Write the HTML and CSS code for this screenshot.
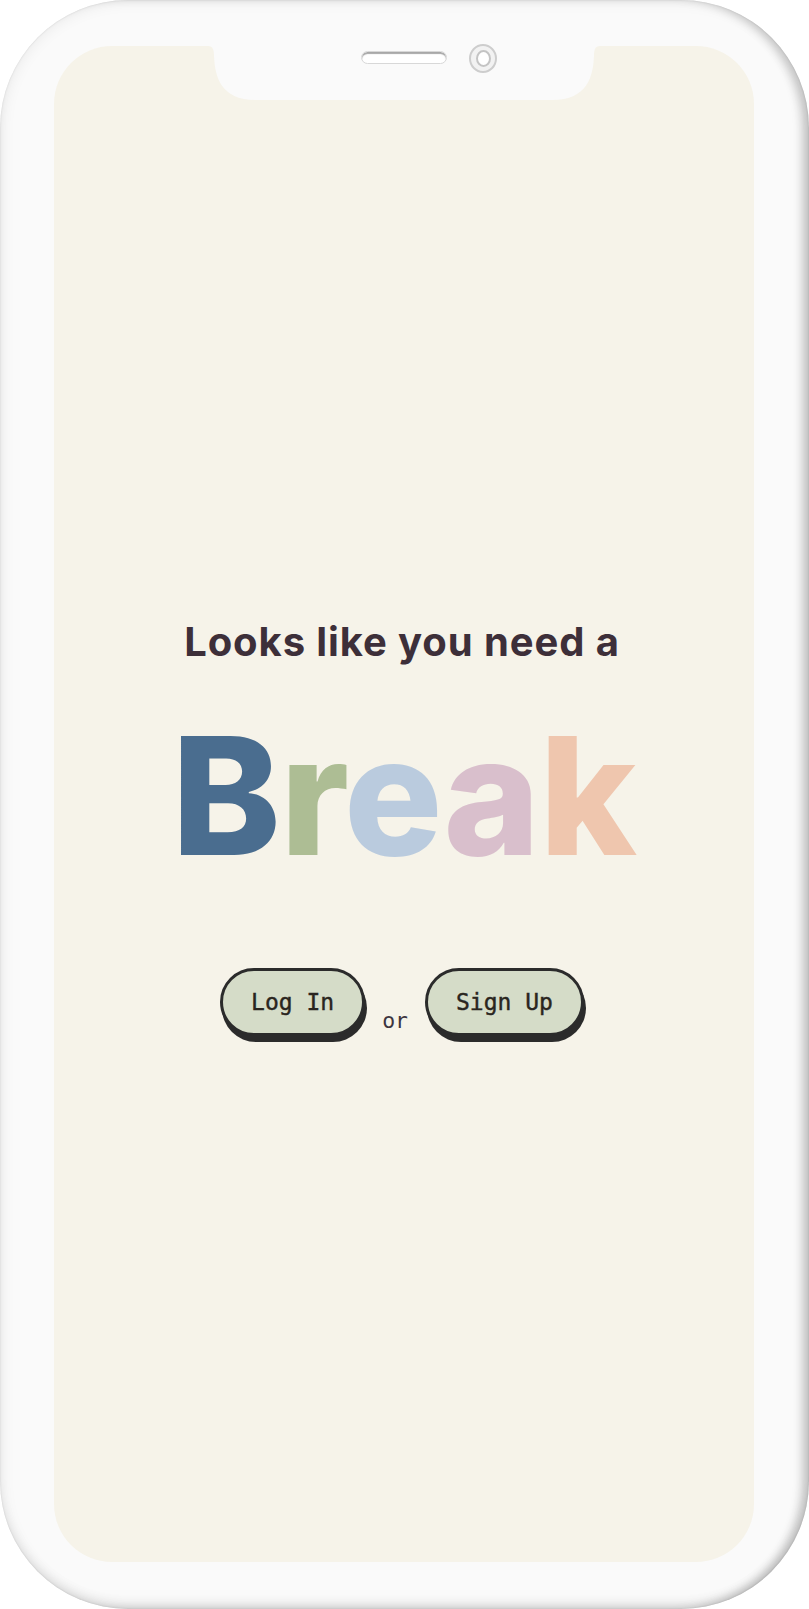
FILE: index.html
```html
<!DOCTYPE html>
<html lang="en">
<head>
<meta charset="utf-8">
<title>Break</title>
<link rel="stylesheet" href="styles.css">
</head>
<body>
<div class="phone">
  <div class="notch">
    <svg class="notch-shape" width="392" height="54" viewBox="0 0 392 54" aria-hidden="true">
      <path d="M0,0 C5,0 6,4 6,10 C7,30 12,54 48,54 H344 C380,54 385,30 386,10 C386,4 387,0 392,0 Z" fill="#fafafa"/>
    </svg>
    <span class="speaker"></span>
    <span class="camera"><span class="lens"></span></span>
  </div>
  <main class="screen">
    <h2 class="tagline">Looks like you need a</h2>
    <h1 class="logo"><span class="c1">B</span><span class="c2">r</span><span class="c3">e</span><span class="c4">a</span><span class="c5">k</span></h1>
    <div class="actions">
      <button class="btn">Log In</button>
      <span class="or">or</span>
      <button class="btn">Sign Up</button>
    </div>
  </main>
</div>
</body>
</html>
```

FILE: styles.css
```css
html, body {
  margin: 0;
  padding: 0;
  background: #ffffff;
}

.phone {
  position: relative;
  box-sizing: border-box;
  width: 809px;
  height: 1609px;
  display: flex;
  padding: 46px 55px 47px 54px;
  border-radius: 128px;
  background: #fafafa;
  box-shadow:
    inset 0 0 2px rgba(0,0,0,0.12),
    inset 0 0 16px rgba(0,0,0,0.08),
    inset -9px 0 10px -2px rgba(0,0,0,0.18),
    inset 0 -8px 12px -4px rgba(0,0,0,0.1);
}

.screen {
  flex: 1;
  display: flex;
  flex-direction: column;
  align-items: center;
  justify-content: center;
  padding-top: 50px;
  border-radius: 58px;
  background: #f6f3e9;
}

.notch {
  position: absolute;
  top: 46px;
  left: 208px;
  width: 392px;
  height: 54px;
}

.notch-shape {
  position: absolute;
  left: 0;
  top: 0;
  display: block;
}

.speaker {
  position: absolute;
  left: 153px;
  top: 5px;
  width: 86px;
  height: 13px;
  box-sizing: border-box;
  border-radius: 7px;
  background: #ffffff;
  border: 1px solid #d8d8d8;
  box-shadow: inset 0 2px 1px #a8a8a8;
}

.camera {
  position: absolute;
  left: 261px;
  top: -2px;
  width: 28px;
  height: 29px;
  box-sizing: border-box;
  border-radius: 50%;
  border: 2px solid #cdcdcd;
  background: #f2f2f2;
  display: flex;
  align-items: center;
  justify-content: center;
}

.lens {
  width: 15px;
  height: 17px;
  box-sizing: border-box;
  border-radius: 50%;
  border: 2px solid #c4c4c4;
  background: #ffffff;
}

.tagline {
  margin: 0 0 0 -4px;
  font-family: "Inter", "Lato", sans-serif;
  font-weight: 700;
  font-size: 40px;
  line-height: 1;
  color: #3d2f39;
  letter-spacing: 0.9px;
}

.logo {
  margin: 52px 0 0;
  font-family: "Inter", "Lato", sans-serif;
  font-weight: 800;
  font-size: 164px;
  line-height: 1;
  letter-spacing: -0.5px;
}

.c1 { color: #4a6d8f; }
.c2 { color: #adbd94; }
.c3 { color: #bacbde; }
.c4 { color: #d9bfcc; }
.c5 { color: #efc6ae; }

.actions {
  display: flex;
  align-items: flex-end;
  gap: 17px;
  margin: 90px 4px 0 0;
}

.btn {
  height: 68px;
  padding: 0 28px;
  border: 3px solid #2b2b2b;
  border-radius: 34px;
  background: #d5dcc8;
  box-shadow: 2px 6px 0 #2b2b2b;
  font-family: "DejaVu Sans Mono", monospace;
  font-size: 23px;
  font-weight: 400;
  color: #2a2520;
  -webkit-text-stroke: 0.4px #2a2520;
  cursor: pointer;
}

.or {
  font-family: "DejaVu Sans Mono", monospace;
  font-size: 21.5px;
  color: #3d3540;
  line-height: 1;
  margin-bottom: 5px;
}
```
